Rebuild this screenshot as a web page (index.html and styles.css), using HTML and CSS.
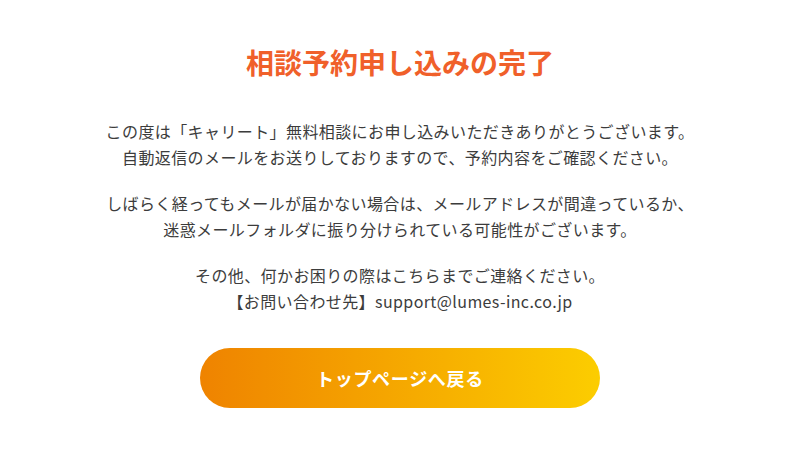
FILE: index.html
```html
<!DOCTYPE html>
<html lang="ja">
<head>
<meta charset="utf-8">
<link rel="stylesheet" href="styles.css">
</head>
<body>
<main class="page">
  <h1 class="title">相談予約申し込みの完了</h1>
  <div class="message">
    <p>この度は「キャリート」無料相談にお申し込みいただきありがとうございます。<br>自動返信のメールをお送りしておりますので、予約内容をご確認ください。</p>
    <p>しばらく経ってもメールが届かない場合は、メールアドレスが間違っているか、<br>迷惑メールフォルダに振り分けられている可能性がございます。</p>
    <p>その他、何かお困りの際はこちらまでご連絡ください。<br>【お問い合わせ先】support@lumes-inc.co.jp</p>
  </div>
  <a class="btn" href="#">トップページへ戻る</a>
</main>
</body>
</html>
```

FILE: styles.css
```css
html, body {
  margin: 0;
  padding: 0;
  background: #ffffff;
}
body {
  font-family: "Noto Sans CJK JP", "Noto Sans", sans-serif;
  color: #3c3c3c;
}
.page {
  display: flex;
  flex-direction: column;
  align-items: center;
  padding-top: 42px;
}
.title {
  margin: 0;
  font-size: 28px;
  line-height: 40px;
  font-weight: 700;
  color: #f0602a;
  letter-spacing: 0;
}
.message {
  margin-top: 36px;
  text-align: center;
  font-size: 16px;
  line-height: 26px;
  letter-spacing: 0.4px;
}
.message p {
  margin: 0 0 20px;
}
.message p:last-child {
  margin-bottom: 0;
}
.btn {
  margin-top: 34px;
  width: 400px;
  height: 60px;
  border-radius: 30px;
  background: linear-gradient(90deg, #ef8300 0%, #fccd00 100%);
  color: #ffffff;
  font-size: 18px;
  font-weight: 700;
  letter-spacing: 0.7px;
  text-decoration: none;
  display: flex;
  align-items: center;
  justify-content: center;
}
```
